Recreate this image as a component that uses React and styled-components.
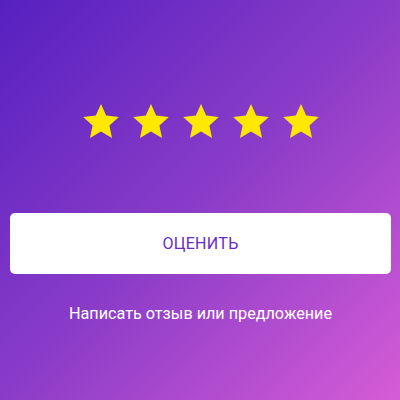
import styled, { createGlobalStyle } from "styled-components"

const Global = createGlobalStyle`
    html, body {
        margin: 0;
        padding: 0;
    }
    body {
        font-family: Roboto, "Liberation Sans", sans-serif;
    }
`
const Pantalla = styled.main`
    width: 400px;
    height: 400px;
    box-sizing: border-box;
    padding: 104px 9px 0 10px;
    display: flex;
    flex-direction: column;
    align-items: stretch;
    background: linear-gradient(135deg, #5620c0 0%, #8a3cc8 50%, #d65cd6 100%);
`
const Estrellas = styled.div`
    display: flex;
    justify-content: center;
    gap: 14px;
    height: 34px;
`
const Estrella = styled.svg`
    width: 36px;
    height: 34px;
    display: block;
`
const Boton = styled.button`
    margin-top: 75px;
    height: 61px;
    border: none;
    border-radius: 5px;
    background: #ffffff;
    color: #6a2cc6;
    font-family: Roboto, "Liberation Sans", sans-serif;
    font-size: 16px;
    letter-spacing: 0.3px;
    cursor: pointer;
`
const Enlace = styled.a`
    margin-top: 30px;
    text-align: center;
    color: #ffffff;
    font-size: 16.2px;
    line-height: 20px;
    text-decoration: none;
`

const Star = () => (
    <Estrella viewBox="0 0 36 34.3">
        <polygon
            fill="#ffe800"
            points="18,0 23.2,11.7 36,13.1 26.5,21.6 29.1,34.2 18,27.8 6.9,34.2 9.5,21.6 0,13.1 12.8,11.7"
        />
    </Estrella>
)

const App = () => {
    return <>
        <Global />
        <Pantalla>
            <Estrellas>
                {[1, 2, 3, 4, 5].map(n => <Star key={n} />)}
            </Estrellas>
            <Boton>ОЦЕНИТЬ</Boton>
            <Enlace href="#">Написать отзыв или предложение</Enlace>
        </Pantalla>
    </>
}

export default App
